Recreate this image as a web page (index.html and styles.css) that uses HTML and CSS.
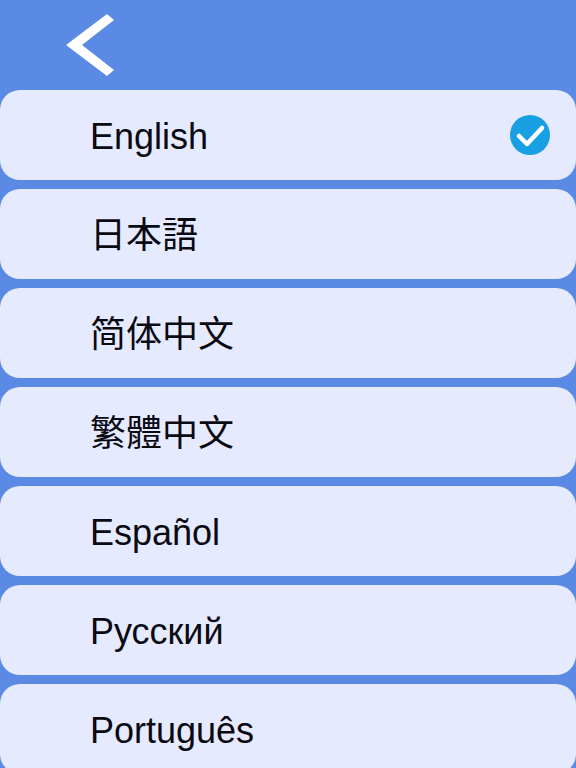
FILE: index.html
```html
<!DOCTYPE html>
<html lang="en">
<head>
    <meta charset="UTF-8">
    <meta name="viewport" content="width=device-width, initial-scale=1.0">
    <title>Language</title>
    <link rel="stylesheet" href="styles.css">
</head>
<body>

    <svg width="0" height="0" class="symbols" aria-hidden="true">
        <symbol id="check" viewBox="0 0 40 40">
            <circle cx="20" cy="20" r="20" fill="#18a0e2"/>
            <path d="M9 21 L17 29 L32 13" fill="none" stroke="#fff" stroke-width="4.5" stroke-linecap="round" stroke-linejoin="round"/>
        </symbol>
    </svg>

    <header class="header">
        <button class="back-button" type="button" aria-label="Back">
            <svg width="48" height="62" viewBox="0 0 48 62" aria-hidden="true">
                <path d="M41 0 L48 6 L16 31 L48 56 L41 62 L0 31 Z" fill="#fff"/>
            </svg>
        </button>
    </header>

    <main class="language-list">
        <label class="language">
            <span class="language-name">English</span>
            <input class="language-input" type="radio" name="language" value="en" checked>
            <svg class="check" aria-hidden="true"><use href="#check"/></svg>
        </label>
        <label class="language">
            <span class="language-name" lang="ja">日本語</span>
            <input class="language-input" type="radio" name="language" value="ja">
            <svg class="check" aria-hidden="true"><use href="#check"/></svg>
        </label>
        <label class="language">
            <span class="language-name" lang="zh-Hans">简体中文</span>
            <input class="language-input" type="radio" name="language" value="zh-Hans">
            <svg class="check" aria-hidden="true"><use href="#check"/></svg>
        </label>
        <label class="language">
            <span class="language-name" lang="zh-Hant">繁體中文</span>
            <input class="language-input" type="radio" name="language" value="zh-Hant">
            <svg class="check" aria-hidden="true"><use href="#check"/></svg>
        </label>
        <label class="language">
            <span class="language-name" lang="es">Español</span>
            <input class="language-input" type="radio" name="language" value="es">
            <svg class="check" aria-hidden="true"><use href="#check"/></svg>
        </label>
        <label class="language">
            <span class="language-name" lang="ru">Русский</span>
            <input class="language-input" type="radio" name="language" value="ru">
            <svg class="check" aria-hidden="true"><use href="#check"/></svg>
        </label>
        <label class="language">
            <span class="language-name" lang="pt">Português</span>
            <input class="language-input" type="radio" name="language" value="pt">
            <svg class="check" aria-hidden="true"><use href="#check"/></svg>
        </label>
    </main>

</body>
</html>
```

FILE: styles.css
```css
:root {
    --bg-color: #5b8ae5;
    --row-color: #e6eaff;
    --text-color: #0a0a12;
}
html { scrollbar-width: none; }
body {
    font-family: "Liberation Sans", "Noto Sans CJK SC", sans-serif;
    background-color: var(--bg-color);
    color: var(--text-color);
    margin: 0;
}
.symbols { position: absolute; }

/* Header */
.header {
    display: flex;
    align-items: center;
    height: 90px;
    padding: 0 66px;
}
.back-button {
    padding: 0;
    border: none;
    background: none;
    cursor: pointer;
}
.back-button svg { display: block; }

/* Language rows */
.language-list {
    display: flex;
    flex-direction: column;
    gap: 9px;
}
.language {
    position: relative;
    display: flex;
    align-items: center;
    justify-content: space-between;
    height: 90px;
    padding: 0 26px 0 90px;
    box-sizing: border-box;
    border-radius: 20px;
    background-color: var(--row-color);
    cursor: pointer;
}
.language-name {
    padding-top: 4px;
    font-size: 36px;
    line-height: 40px;
}
.language-name:lang(ja) { font-family: "Liberation Sans", "Noto Sans CJK JP", sans-serif; }
.language-name:lang(zh-Hant) { font-family: "Liberation Sans", "Noto Sans CJK TC", sans-serif; }

/* The radio covers the whole row, the tick shows its state */
.language-input {
    position: absolute;
    inset: 0;
    margin: 0;
    opacity: 0;
    cursor: pointer;
}
.check { display: none; width: 40px; height: 40px; }
.language-input:checked + .check { display: block; }
```
